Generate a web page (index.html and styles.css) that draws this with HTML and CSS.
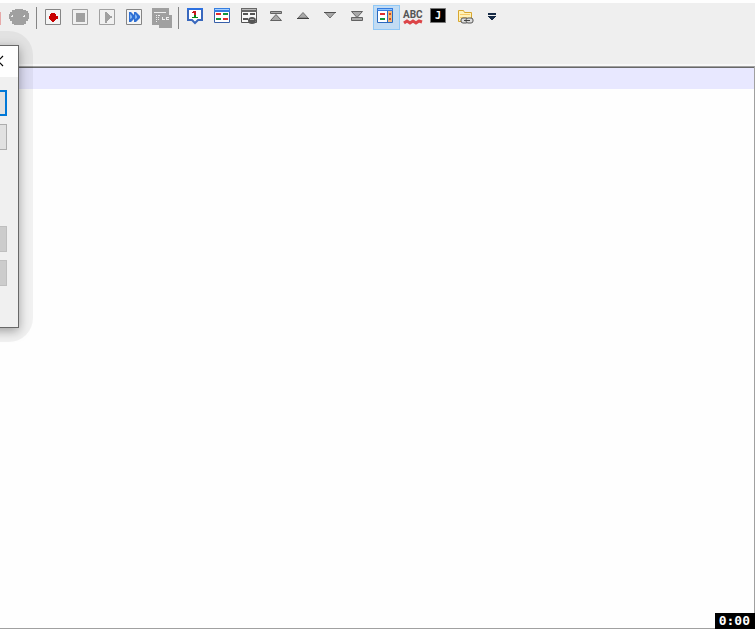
FILE: index.html
```html
<!DOCTYPE html>
<html lang="en">
<head>
<meta charset="utf-8">
<title>Editor</title>
<link rel="stylesheet" href="styles.css">
</head>
<body>
<div class="toolbar" role="toolbar" aria-label="Tools">
  <button class="tool" aria-label="Monitor"><svg viewBox="0 0 20 20"><path fill="#e7a9a9" d="M6 4h11v13H6z"/></svg></button>
  <button class="tool" aria-label="Mask"><svg viewBox="0 0 20 20"><path fill="#a0a0a0" d="M4 1h8v1h3v1h2v2h1v6h-1v2h-2v3h-2v1H3v-1H1v-3h-2v-2h-1V6h1V4h2V2h3z"/><path fill="#efefef" d="M0 8h2v1H0zM1 7h1v1H1zM12 8h2v1h-2zM13 7h1v1h-1z"/></svg></button>
  <span class="divider"></span>
  <button class="tool" aria-label="Record"><svg viewBox="0 0 20 20"><path fill="#f4f4f4" stroke="#858585" d="M.5 1.5h15v15H.5z"/><path fill="#c80000" d="M6 5h4v1h1v2h2v3h-2v1h-1v1H9v1H7v-1H6v-1H5v-1H4V8h1V6h1z"/></svg></button>
  <button class="tool" aria-label="Stop"><svg viewBox="0 0 20 20"><path fill="#f0f0f0" stroke="#a0a0a0" d="M.5 1.5h15v15H.5z"/><path fill="#a0a0a0" d="M4 5h9v9H4z"/></svg></button>
  <button class="tool" aria-label="Play"><svg viewBox="0 0 20 20"><path fill="#f0f0f0" stroke="#a0a0a0" d="M.5 1.5h15v15H.5z"/><path fill="#a0a0a0" d="M6 4h2v1h1v1h1v1h1v1h2v2h-2v1h-1v1h-1v1H8v2H6z"/></svg></button>
  <button class="tool" aria-label="Play many times"><svg viewBox="0 0 20 20"><path fill="#f4f4f4" stroke="#858585" d="M.5 1.5h15v15H.5z"/><path fill="#2f70d4" d="M3 4h2l3 3V4h2l4 4v2l-4 4H8v-3l-3 3H3z"/><path fill="#83b6f4" d="M4 6l2 2v2l-2 1zM9 6l2 2v2l-2 1z"/></svg></button>
  <button class="tool" aria-label="Save macro"><svg viewBox="0 0 20 20"><path fill="#a0a0a0" d="M-1 0h17v7h3v13H6v-3h-7z"/><path fill="#efefef" d="M1 4h12v1H1zM3 7h1v1H3zM5 7h2v1H5zM3 9h1v1H3zM3 11h1v1H3zM3 13h1v1H3zM5 9h1v1H5zM5 11h1v1H5zM9 9h1v2h2v1H9zM13 9h3v1h-2v1h2v1h-3z"/></svg></button>
  <span class="divider"></span>
  <button class="tool" aria-label="Bookmark"><svg viewBox="0 0 20 20"><path fill="#fff" stroke="#3968bd" stroke-width="2" d="M1 1h14v11h-4l-3 3-3-3H1z"/><path fill="#2d70df" d="M0 0h16v2H0z"/><path fill="#c8191b" d="M6 3h3v4H7V5H5V4h1z"/><path fill="#058b18" d="M7 7h2v2h2v1H5V9h2z"/></svg></button>
  <button class="tool" aria-label="Compare"><svg viewBox="0 0 20 20"><path fill="#fff" stroke="#375fa9" d="M.5.5h15v14H.5z"/><path fill="#367ee0" d="M0 0h16v4H0z"/><path fill="#a7d0ff" d="M1 1h14v1H1z"/><path fill="#e02c2d" d="M2 5h5v2H2zM9 10h5v2H9z"/><path fill="#12943a" d="M9 5h5v2H9zM2 10h5v2H2z"/></svg></button>
  <button class="tool" aria-label="Clear compare"><svg viewBox="0 0 20 20"><path fill="#f8f8f8" stroke="#555" d="M.5.5h15v14H.5z"/><path fill="#686868" d="M0 0h16v4H0z"/><path fill="#b8b8b8" d="M1 1h14v1H1z"/><path fill="#555" d="M2 5h5v2H2zM9 5h5v2H9zM2 10h5v2H2z"/><ellipse cx="11" cy="12.500" rx="4" ry="3.500" fill="#555"/><path fill="#aaa" d="M9 11h4v1H9z"/></svg></button>
  <button class="tool" aria-label="First difference"><svg viewBox="0 0 20 20"><path fill="#a8a8a8" stroke="#626262" d="M2.500 3.500h11v2h-11zM8 6.500l5.500 6h-11z"/></svg></button>
  <button class="tool" aria-label="Previous difference"><svg viewBox="0 0 20 20"><path fill="#a8a8a8" stroke="#707070" d="M8 4.500l5 5.500H3z"/><path fill="#404040" d="M2 10h12v1H2z"/></svg></button>
  <button class="tool" aria-label="Next difference"><svg viewBox="0 0 20 20"><path fill="#a8a8a8" stroke="#707070" d="M3 4.500h10l-5 5.500z"/><path fill="#505050" d="M2 4h12v1H2z"/></svg></button>
  <button class="tool" aria-label="Last difference"><svg viewBox="0 0 20 20"><path fill="#a8a8a8" stroke="#626262" d="M2.500 3.500h11l-5.500 6zM2.500 9.500h11v3h-11z"/></svg></button>
  <button class="tool tool-on" aria-label="Navigation bar" aria-pressed="true"><svg viewBox="0 0 20 20"><path fill="#fff" stroke="#2969bf" d="M1.500.500h15v14h-15z"/><path fill="#347be0" d="M1 0h16v3H1z"/><path fill="#8fc5ff" d="M2 1h14v1H2z"/><path fill="#e02c2d" d="M4 5h5v2H4z"/><path fill="#12943a" d="M4 10h5v2H4z"/><path fill="#2969bf" d="M11 3h1v11h-1z"/><path fill="#f6b978" d="M12 3h4v11h-4z"/><path fill="#d84c20" d="M13 5h2v2h-2zM13 10h2v2h-2z"/></svg></button>
  <button class="tool" aria-label="ABC spell check"><svg viewBox="0 0 20 20"><text class="spell" x="0" y="10">ABC</text><path fill="none" stroke="#dc4548" stroke-width="3" d="M1 15l3-2 3 2 3-2 3 2 3-2 3 1"/></svg></button>
  <button class="tool" aria-label="J tool"><svg viewBox="0 0 20 20"><path fill="#000" stroke="#777" d="M.5.500h15v14H.5z"/><text class="letter" x="5" y="11">J</text></svg></button>
  <button class="tool" aria-label="Linked folder"><svg viewBox="0 0 20 20"><path fill="#fff2ba" stroke="#d8a62e" d="M1.500 13.500v-11h5l1 2h7v9z"/><path fill="#f8ca68" d="M3 6h10v1H3zM3 9h7v1H3z"/><rect x="4" y="10" width="7" height="5" rx="2" fill="#ddd" stroke="#555"/><rect x="9" y="10" width="7" height="5" rx="2" fill="#ddd" stroke="#555"/><path fill="#444" d="M7 12h6v1H7z"/></svg></button>
  <button class="tool" aria-label="More tools"><svg viewBox="0 0 20 20"><path fill="#172b46" d="M4 5h8v2H4zM4 8h8v1h-1v1h-1v1H9v1H7v-1H6v-1H5V9H4z"/></svg></button>
</div>
<main class="editor"><div class="current-line"></div></main>
<div class="dialog-halo">
  <section class="dialog" role="dialog" aria-label="Dialog">
    <header class="dialog-title"><button class="close" aria-label="Close"><svg viewBox="0 0 12 12"><path fill="none" stroke="#000" stroke-width="1.200" d="M1 1l10 10M11 1L1 11"/></svg></button></header>
    <div class="dialog-body">
      <div class="actions">
        <button class="action action-default" aria-label="Confirm"></button>
        <button class="action" aria-label="Cancel"></button>
      </div>
      <div class="actions">
        <button class="action" aria-label="Modify" disabled></button>
        <button class="action" aria-label="Delete" disabled></button>
      </div>
    </div>
  </section>
</div>
<time class="timer">0:00</time>
</body>
</html>
```
FILE: styles.css
```css
* { box-sizing: border-box; }
body {
  margin: 0;
  height: 100vh;
  display: flex;
  flex-direction: column;
  overflow: hidden;
  position: relative;
  background: #fefefe;
  font-family: "Liberation Sans", sans-serif;
}
button { padding: 0; border: 0; background: none; }
.toolbar {
  display: flex;
  align-items: flex-start;
  height: 66px;
  flex: none;
  padding-top: 2px;
  border-top: 3px solid #fefefe;
  border-bottom: 2px solid #f8f8f8;
  background: #efefef;
}
.toolbar .tool:first-child { margin-left: -19px; }
.tool {
  width: 27px;
  height: 25px;
  flex: none;
  padding: 3px;
  border: 0;
  background: none;
}
.tool svg { display: block; width: 20px; height: 20px; overflow: visible; }
.tool-on { background: #c2dcf3; box-shadow: inset 0 0 0 1px #90c8f6; }
.divider { width: 1px; height: 22px; margin: 2px 5px 0 1px; background: #858585; }
.spell { font: bold 10px Roboto, "Liberation Sans", sans-serif; fill: #555; }
.letter { font: bold 10px "DejaVu Sans Mono", monospace; fill: #fff; }
.editor {
  flex: 1;
  border-top: 1px solid #a0a0a0;
  border-right: 1px solid #a0a0a0;
  border-bottom: 1px solid #a0a0a0;
  background: #fefefe;
}
.current-line { height: 22px; border-top: 1px solid #686868; background: #e8e8ff; }
.dialog-halo {
  position: absolute;
  top: 31px;
  left: -295px;
  width: 328px;
  padding: 14px;
  border-radius: 24px;
  background: rgba(0, 0, 0, .05);
}
.dialog {
  padding-bottom: 41px;
  border: 1px solid #686868;
  background: #f0f0f0;
  box-shadow: 0 3px 10px rgba(0, 0, 0, .35);
}
.dialog-title {
  display: flex;
  justify-content: flex-end;
  height: 31px;
  padding: 9px 14px 0 0;
  background: #fefefe;
}
.close { width: 12px; height: 12px; }
.close svg { display: block; }
.dialog-body {
  display: flex;
  flex-direction: column;
  gap: 76px;
  align-items: flex-end;
  padding: 13px 11px 0 0;
}
.actions { display: grid; gap: 8px; }
.action { width: 75px; height: 26px; border: 1px solid #adadad; background: #e1e1e1; }
.action-default { border: 2px solid #0078d7; }
.action:disabled { border-color: #bfbfbf; background: #ccc; }
.timer {
  position: absolute;
  right: 0;
  bottom: 0;
  padding: 0 5px 0 4px;
  background: #000;
  color: #fff;
  font: bold 13px/16px "DejaVu Sans Mono", monospace;
}
```
